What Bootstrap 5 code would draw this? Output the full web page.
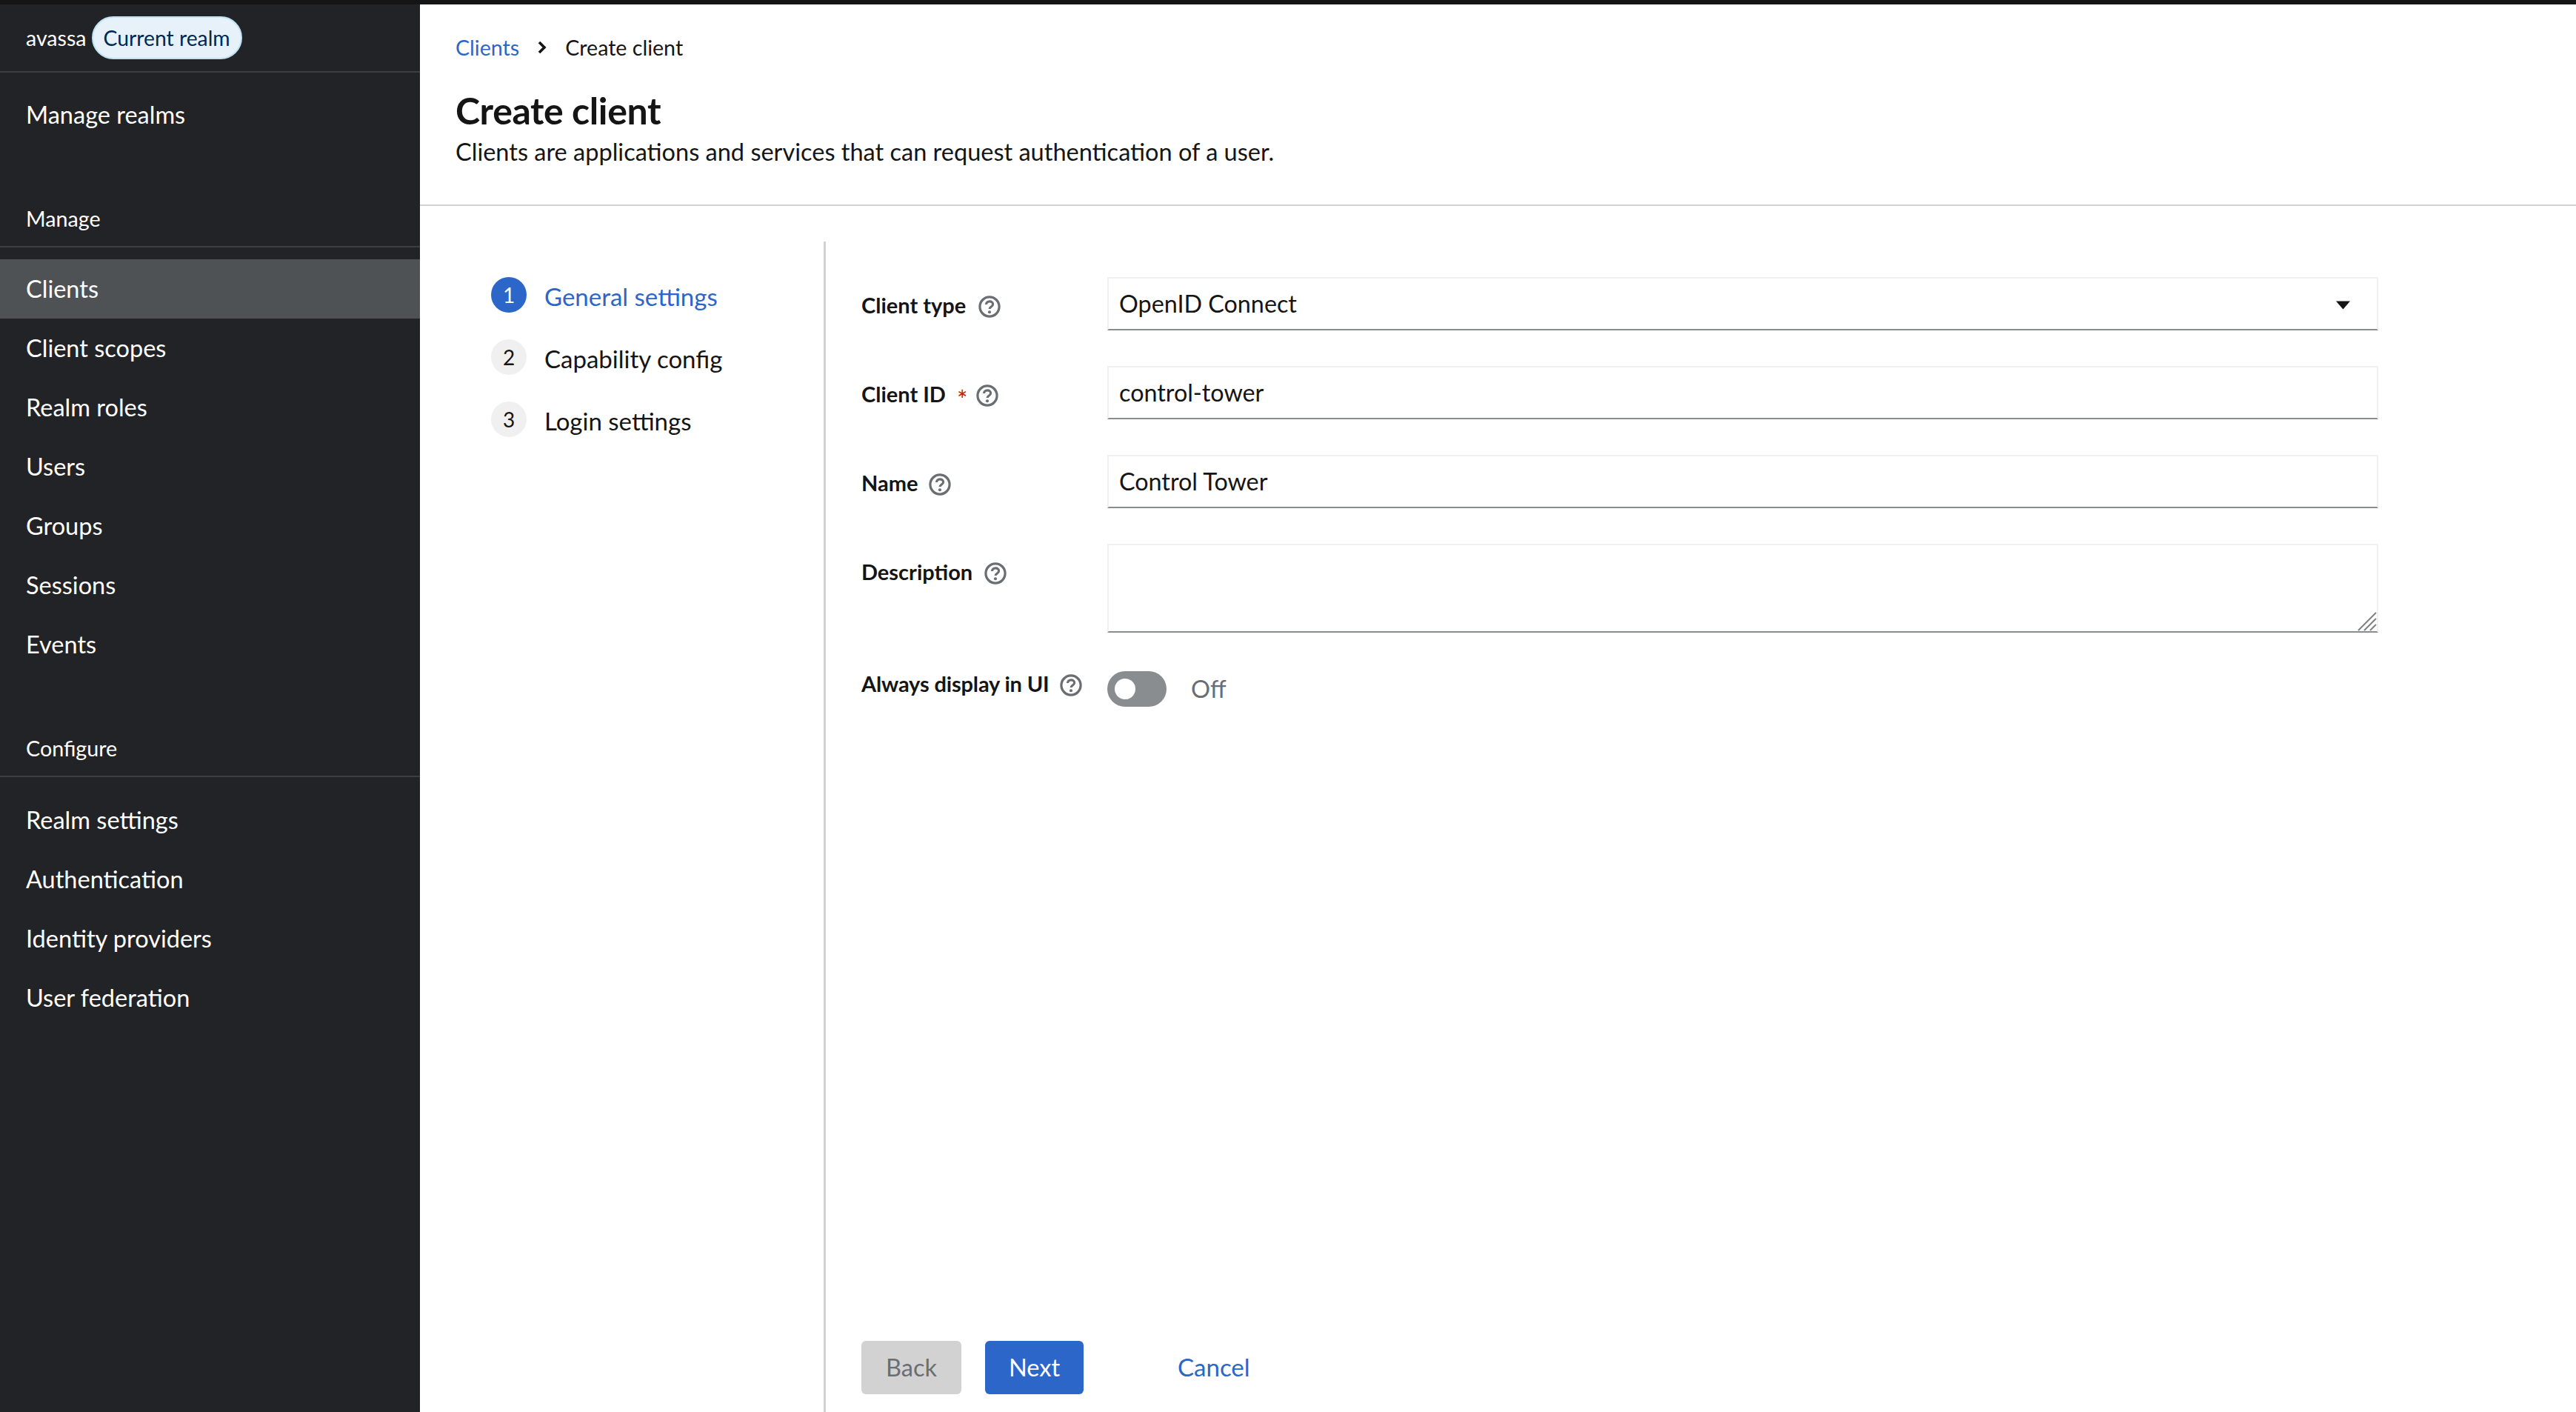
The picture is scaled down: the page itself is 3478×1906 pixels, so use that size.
<!doctype html>
<html lang="en"><head><meta charset="utf-8"><title>Create client</title>
<link href="https://cdn.jsdelivr.net/npm/bootstrap@5.3.0/dist/css/bootstrap.min.css" rel="stylesheet">
<style>
:root{--kc-blue:#2b66c8;--kc-ink:#151515;--kc-line:#d2d2d2;}
html,body{height:100%;}
body{font-family:"Lato","Liberation Sans",sans-serif;color:var(--kc-ink);font-size:32px;overflow:hidden;background:#fff;}
.topstrip{height:6px;background:#151515;flex:none;}
.app-shell{min-height:0;}
.side{width:567px;flex:none;background:#222327;color:#fff;}
.realm-head{height:92px;padding:0 0 0 35px;border-bottom:2px solid #3c3f42;font-size:28.6px;gap:7px;}
.realm-pill{height:58px;padding:0 14px;border-radius:29px;background:#e7f1fa;border:2px solid #bee1f4;color:#002952;font-size:28.3px;line-height:1;}
.side-link{display:flex;align-items:center;height:80px;padding-left:35px;color:#fff;text-decoration:none;font-size:32.5px;}
.side-link.is-current{background:#4f5255;}
.side-first{margin-top:17px;}
.side-title{font-size:28.7px;line-height:42px;padding:0 0 16px 35px;border-bottom:2px solid #3c3f42;margin-bottom:16px;}
.title-manage{margin-top:79px;}
.title-config{margin-top:79px;margin-bottom:18px;}
.page-head{height:272px;padding:37px 0 0 48px;border-bottom:2px solid var(--kc-line);flex:none;}
.crumbs{line-height:42px;font-size:28.6px;gap:24px;}
.crumbs a{color:var(--kc-blue);text-decoration:none;}
.page-title{font-size:50px;font-weight:700;line-height:60px;margin:34px 0 0;letter-spacing:-.4px;}
.page-sub{font-size:32.5px;line-height:48px;margin:2px 0 0;}
.wiz{margin-top:48px;min-height:0;}
.wiz-nav{width:548px;flex:none;padding:48px 0 0 96px;border-right:3px solid var(--kc-line);}
.wiz-step{gap:24px;margin-bottom:36px;height:48px;font-size:33px;}
.wiz-num{width:48px;height:48px;border-radius:50%;background:#f0f0f0;font-size:28px;flex:none;}
.wiz-step.is-current .wiz-num{background:var(--kc-blue);color:#fff;}
.wiz-step.is-current .wiz-txt{color:var(--kc-blue);}
.wiz-txt{position:relative;top:3px;}
.wiz-form{padding:48px 0 24px 48px;min-width:0;}
.frow{margin-bottom:48px;}
.flabel{width:332px;flex:none;padding-top:17px;font-size:29px;font-weight:700;line-height:42px;}
.help-ico{width:30px;height:30px;flex:none;}
.tight-label{letter-spacing:-.15px;}
.req{color:#c9190b;margin-left:15px;font-weight:400;font-size:34px;line-height:42px;margin-top:7px;}
.ffield{width:1716px;flex:none;position:relative;}
.ffield .form-control{height:72px;border:2px solid #f0f0f0;border-bottom-color:#8a8d90;border-radius:0;padding:0 14px;font-size:32.3px;color:var(--kc-ink);line-height:66px;box-shadow:none;}
.ffield textarea.form-control{height:120px;resize:none;}
.grip{position:absolute;right:2px;bottom:2px;width:26px;height:26px;pointer-events:none;}
.drop-caret{width:19px;height:12px;margin-right:22px;margin-top:3px;}
.toggle-track{width:80px;height:48px;border-radius:24px;background:#8a8d90;padding-left:10px;margin-top:4px;flex:none;}
.toggle-knob{width:28px;height:28px;border-radius:50%;background:#fff;}
.toggle-word{color:#6a6e73;margin-left:33px;font-size:32.5px;line-height:48px;margin-top:4px;}
.btn.fbtn{height:72px;border-radius:6px;border:0;font-size:32.5px;padding:0 32px;line-height:1;}
.btn.fbtn-off:disabled{background:var(--kc-line);color:#6a6e73;opacity:1;padding:0 33px;}
.btn.fbtn-go,.btn.fbtn-go:hover{background:var(--kc-blue);color:#fff;margin-left:32px;}
.fbtn-txt{color:var(--kc-blue);text-decoration:none;margin-left:94px;padding:0 33px;font-size:33px;}
</style></head>
<body class="d-flex flex-column">
<div class="topstrip"></div>
<div class="app-shell d-flex flex-grow-1">
  <nav class="side d-flex flex-column">
    <div class="realm-head d-flex align-items-center"><span>avassa</span><span class="realm-pill d-inline-flex align-items-center">Current realm</span></div>
    <a class="side-link side-first" href="#">Manage realms</a>
    <div class="side-title title-manage">Manage</div>
    <a class="side-link is-current" href="#">Clients</a>
    <a class="side-link" href="#">Client scopes</a>
    <a class="side-link" href="#">Realm roles</a>
    <a class="side-link" href="#">Users</a>
    <a class="side-link" href="#">Groups</a>
    <a class="side-link" href="#">Sessions</a>
    <a class="side-link" href="#">Events</a>
    <div class="side-title title-config">Configure</div>
    <a class="side-link" href="#">Realm settings</a>
    <a class="side-link" href="#">Authentication</a>
    <a class="side-link" href="#">Identity providers</a>
    <a class="side-link" href="#">User federation</a>
  </nav>
  <main class="flex-grow-1 d-flex flex-column" style="min-width:0">
    <header class="page-head">
      <div class="crumbs d-flex align-items-center"><a href="#">Clients</a>
        <svg width="14" height="18" viewBox="0 0 14 18"><path d="M3 2l7 7-7 7" fill="none" stroke="#151515" stroke-width="3.6"/></svg>
        <span>Create client</span></div>
      <h1 class="page-title">Create client</h1>
      <p class="page-sub">Clients are applications and services that can request authentication of a user.</p>
    </header>
    <div class="wiz d-flex flex-grow-1">
      <div class="wiz-nav">
        <div class="wiz-step is-current d-flex align-items-center"><span class="wiz-num d-flex align-items-center justify-content-center">1</span><span class="wiz-txt">General settings</span></div>
        <div class="wiz-step d-flex align-items-center"><span class="wiz-num d-flex align-items-center justify-content-center">2</span><span class="wiz-txt">Capability config</span></div>
        <div class="wiz-step d-flex align-items-center"><span class="wiz-num d-flex align-items-center justify-content-center">3</span><span class="wiz-txt">Login settings</span></div>
      </div>
      <div class="wiz-form flex-grow-1 d-flex flex-column">
        <svg width="0" height="0" class="position-absolute"><defs><symbol id="qm" viewBox="0 0 28 28"><circle cx="14" cy="14" r="12.2" fill="none" stroke="#6a6e73" stroke-width="3"/><path d="M9.8 11.3c0-2.5 1.9-4 4.3-4s4.2 1.5 4.2 3.6c0 3.1-4.2 3-4.2 6" fill="none" stroke="#6a6e73" stroke-width="2.9"/><circle cx="14" cy="20.8" r="1.9" fill="#6a6e73"/></symbol></defs></svg>

        <div class="frow d-flex">
          <div class="flabel d-flex align-items-start"><span>Client type</span><svg class="help-ico" style="margin:8px 0 0 17px"><use href="#qm"/></svg></div>
          <div class="ffield"><div class="form-control d-flex align-items-center justify-content-between"><span>OpenID Connect</span><svg class="drop-caret" viewBox="0 0 19 12"><path d="M0 .5h19L9.5 11.5z" fill="#151515"/></svg></div></div>
        </div>
        <div class="frow d-flex">
          <div class="flabel d-flex align-items-start"><span>Client ID</span><span class="req">*</span><svg class="help-ico" style="margin:8px 0 0 12px"><use href="#qm"/></svg></div>
          <div class="ffield"><div class="form-control d-flex align-items-center">control-tower</div></div>
        </div>
        <div class="frow d-flex">
          <div class="flabel d-flex align-items-start"><span>Name</span><svg class="help-ico" style="margin:8px 0 0 15px"><use href="#qm"/></svg></div>
          <div class="ffield"><div class="form-control d-flex align-items-center">Control Tower</div></div>
        </div>
        <div class="frow d-flex">
          <div class="flabel d-flex align-items-start"><span>Description</span><svg class="help-ico" style="margin:8px 0 0 16px"><use href="#qm"/></svg></div>
          <div class="ffield"><textarea class="form-control d-block"></textarea>
            <svg class="grip" viewBox="0 0 26 26"><path d="M1 25 25 1M9 25 25 9M17 25l8-8" fill="none" stroke="#808080" stroke-width="2"/></svg></div>
        </div>
        <div class="frow d-flex">
          <div class="flabel d-flex align-items-start" style="padding-top:0"><span class="tight-label">Always display in UI</span><svg class="help-ico" style="margin:8px 0 0 14px"><use href="#qm"/></svg></div>
          <div class="d-flex align-items-start"><div class="toggle-track d-flex align-items-center"><div class="toggle-knob"></div></div><span class="toggle-word">Off</span></div>
        </div>
        <div class="mt-auto d-flex align-items-center">
          <button class="btn fbtn fbtn-off" disabled>Back</button>
          <button class="btn fbtn fbtn-go">Next</button>
          <a class="fbtn-txt" href="#">Cancel</a>
        </div>
      </div>
    </div>
  </main>
</div>
<script src="https://cdn.jsdelivr.net/npm/bootstrap@5.3.0/dist/js/bootstrap.bundle.min.js"></script>
</body></html>
